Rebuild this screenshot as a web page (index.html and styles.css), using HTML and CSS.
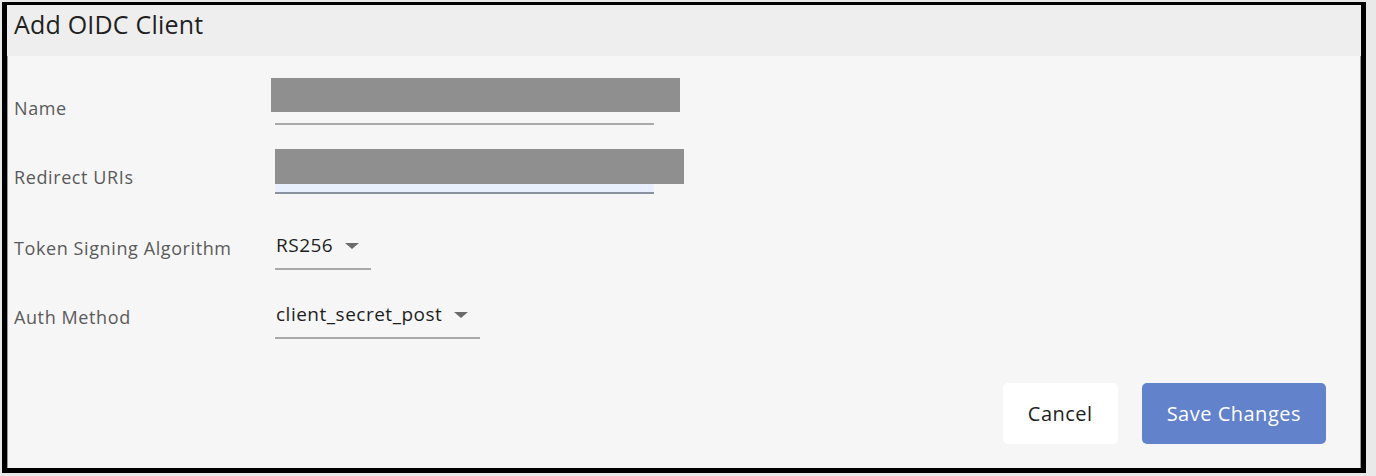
FILE: index.html
```html
<!DOCTYPE html>
<html lang="en">
<head>
<meta charset="utf-8">
<title>Add OIDC Client</title>
<link rel="stylesheet" href="styles.css">
</head>
<body>
<div class="dialog">
  <div class="dialog-header">
    <h1 class="dialog-title">Add OIDC Client</h1>
  </div>
  <div class="dialog-body">
    <div class="form-row row-name">
      <div class="label">Name</div>
      <div class="textfield">
        <div class="redact redact-name"></div>
      </div>
    </div>
    <div class="form-row row-redirect">
      <div class="label">Redirect URIs</div>
      <div class="textfield textfield-autofill">
        <div class="redact redact-redirect"></div>
      </div>
    </div>
    <div class="form-row row-select row-alg">
      <div class="label">Token Signing Algorithm</div>
      <div class="select">
        <span class="select-value">RS256</span>
        <span class="caret"></span>
      </div>
    </div>
    <div class="form-row row-select row-auth">
      <div class="label">Auth Method</div>
      <div class="select">
        <span class="select-value">client_secret_post</span>
        <span class="caret"></span>
      </div>
    </div>
    <div class="actions">
      <button class="btn btn-cancel">Cancel</button>
      <button class="btn btn-primary">Save Changes</button>
    </div>
  </div>
</div>
</body>
</html>
```

FILE: styles.css
```css
html, body {
  margin: 0;
  padding: 0;
  background: #e9e9e9;
}
body {
  font-family: "Open Sans", "Liberation Sans", sans-serif;
  padding: 2px 0 0 2px;
  width: 1376px;
  height: 476px;
  box-sizing: border-box;
  overflow: hidden;
}
.dialog {
  width: 1364px;
  box-sizing: border-box;
  border-style: solid;
  border-color: #000;
  border-width: 3px 5px 5px 5px;
  box-shadow: inset 1px 0 0 #9a9a9a, inset -1px 0 0 #9a9a9a;
  background: #f6f6f6;
}
.dialog-header {
  height: 51px;
  background: #eeeeee;
  padding-left: 7px;
  box-sizing: border-box;
}
.dialog-title {
  margin: 0;
  font-weight: 400;
  font-size: 25px;
  letter-spacing: 0.2px;
  line-height: 38px;
  color: #1f1f1f;
}
.dialog-body {
  padding: 22px 35px 24px 7px;
}
.form-row {
  display: grid;
  grid-template-columns: 261px auto;
  align-items: end;
  justify-items: start;
}
.label {
  font-size: 18px;
  letter-spacing: 0.6px;
  line-height: 24px;
  color: #5a5a5a;
  padding-bottom: 5px;
}
.row-select .label {
  padding-bottom: 10px;
}
.row-redirect { margin-top: 24px; }
.row-alg { margin-top: 39px; }
.row-auth { margin-top: 32px; }

.textfield {
  position: relative;
  width: 379px;
  height: 45px;
  border-bottom: 2px solid #a9a9a9;
}
.textfield-autofill {
  height: 43px;
  background: #e8f0fe;
  border-bottom-color: #8992a0;
}
.redact {
  position: absolute;
  background: #8f8f8f;
}
.redact-name {
  left: -4px;
  top: 0;
  width: 409px;
  height: 34px;
}
.redact-redirect {
  left: 0;
  top: 0;
  width: 409px;
  height: 35px;
}

.select {
  display: flex;
  align-items: center;
  gap: 12px;
  padding: 0 12px 11px 1px;
  border-bottom: 2px solid #a9a9a9;
}
.select-value {
  font-size: 19px;
  letter-spacing: 0.5px;
  line-height: 24px;
  color: #1e1e1e;
}
.caret {
  width: 0;
  height: 0;
  border-left: 7px solid transparent;
  border-right: 7px solid transparent;
  border-top: 6px solid #6b6b6b;
  margin-top: 2px;
}

.actions {
  display: flex;
  justify-content: flex-end;
  gap: 24px;
  margin-top: 44px;
}
.btn {
  height: 61px;
  padding: 0 25px;
  border: none;
  border-radius: 5px;
  font-family: "Open Sans", "Liberation Sans", sans-serif;
  font-size: 20px;
  letter-spacing: 0.5px;
  cursor: pointer;
}
.btn-cancel {
  background: #ffffff;
  color: #1e1e1e;
}
.btn-primary {
  background: #6282cc;
  color: #ffffff;
}
```
